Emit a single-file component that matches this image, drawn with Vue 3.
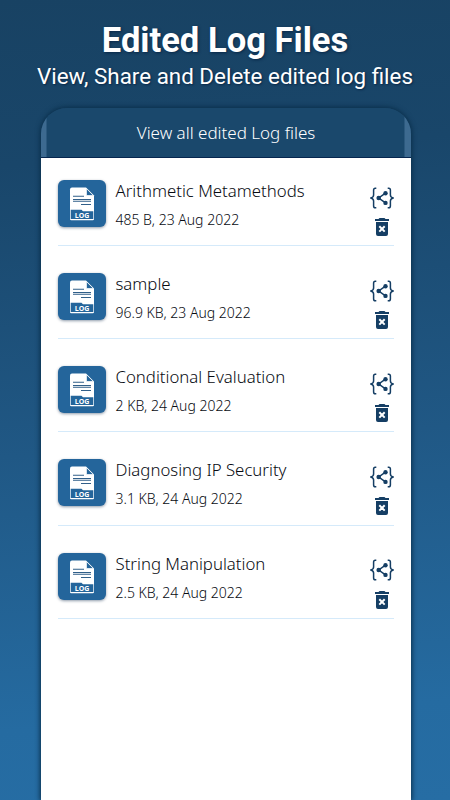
<script setup>
const files = [
  { name: 'Arithmetic Metamethods', meta: '485 B, 23 Aug 2022' },
  { name: 'sample', meta: '96.9 KB, 23 Aug 2022' },
  { name: 'Conditional Evaluation', meta: '2 KB, 24 Aug 2022' },
  { name: 'Diagnosing IP Security', meta: '3.1 KB, 24 Aug 2022' },
  { name: 'String Manipulation', meta: '2.5 KB, 24 Aug 2022' },
]
</script>

<template>
  <main class="page">
    <h1 class="title">Edited Log Files</h1>
    <p class="subtitle">View, Share and Delete edited log files</p>
    <section class="panel">
      <header class="bar"><span>View all edited Log files</span></header>
      <ul class="list">
        <li v-for="file in files" :key="file.name" class="row">
          <div class="thumb">
            <svg width="48" height="48" viewBox="0 0 48 48">
              <path d="M14 7.5H28L36 15.5V39Q36 40.3 34.7 40.3H13.3Q12 40.3 12 39V9.5Q12 7.5 14 7.5Z" fill="#fff" />
              <path d="M28.4 8.5V15.6H35.5Z" fill="#24659b" stroke="#fff" stroke-width=".8" />
              <path d="M15 16.3H26M15 19.5H33M15 21.3H33M23 24.5H33" stroke="#315f89" stroke-width="1.1" />
              <path d="M12.7 29.8H23.5L25 31.2H35.3V39H12.7Z" fill="#24659b" />
              <text x="24" y="38" text-anchor="middle" class="log">LOG</text>
            </svg>
          </div>
          <div class="info">
            <div class="name">{{ file.name }}</div>
            <div class="meta">{{ file.meta }}</div>
          </div>
          <div class="actions">
            <svg width="24" height="22" viewBox="0 0 24 22" fill="none" stroke="#153e64">
              <path d="M6.3 1.2H5.3Q3.6 1.2 3.6 3V8Q3.6 10.2 1 11Q3.6 11.8 3.6 14V19Q3.6 20.8 5.3 20.8H6.3M17.7 1.2H18.7Q20.4 1.2 20.4 3V8Q20.4 10.2 23 11Q20.4 11.8 20.4 14V19Q20.4 20.8 18.7 20.8H17.7" stroke-width="1.5" />
              <path d="M15.5 6.2L8.7 11L15.5 15.9" stroke-width="1.5" />
              <g fill="#153e64" stroke="none">
                <circle cx="15.5" cy="6.2" r="2.2" /><circle cx="8.7" cy="11" r="2.3" /><circle cx="15.5" cy="15.9" r="2.2" />
              </g>
            </svg>
            <svg width="14" height="18" viewBox="0 0 14 18">
              <path d="M0 1H3.5L4.5 0H9.5L10.5 1H14V3H0ZM1 4H13V16Q13 18 11 18H3Q1 18 1 16Z" fill="#153e64" />
              <path d="M4.3 8.2L9.7 13.6M9.7 8.2L4.3 13.6" stroke="#fff" stroke-width="2" />
            </svg>
          </div>
        </li>
      </ul>
    </section>
  </main>
</template>

<style>
body { margin: 0; }
</style>

<style scoped>
.page {
  box-sizing: border-box;
  width: 450px;
  height: 800px;
  padding-top: 18px;
  overflow: hidden;
  display: flex;
  flex-direction: column;
  background: linear-gradient(176deg, #184263 0%, #19466a 20%, #205885 55%, #256ba1 88%, #266da4 100%);
  font-family: Roboto, sans-serif;
  color: #fff;
}
.title {
  margin: 0;
  text-align: center;
  font-size: 34.6px;
  line-height: 44px;
  font-weight: 700;
  text-shadow: 1px 1px 3px #082747;
}
.subtitle {
  margin: 0;
  text-align: center;
  font-size: 22.4px;
  line-height: 28px;
  text-shadow: 1px 1px 2px #082747;
  white-space: nowrap;
}
.panel {
  margin: 18px 39px 0 41px;
  flex: 1;
  display: flex;
  flex-direction: column;
  border-radius: 26px 26px 0 0;
  overflow: hidden;
  box-shadow: 0 0 5px 1px #092e4a;
  font-family: "Noto Sans", "Open Sans", sans-serif;
}
.bar {
  box-sizing: border-box;
  height: 50px;
  display: flex;
  align-items: center;
  justify-content: center;
  background: linear-gradient(90deg, #3d6a90 0, #3d6a90 5px, #1a486c 6px, #1a486c 363px, #3d6a90 364px);
  border-bottom: 1px solid #06264f;
  font-size: 17px;
  font-weight: 300;
}
.list {
  flex: 1;
  list-style: none;
  margin: 0;
  padding: 0 17px;
  background: #fff;
  color: #080b12;
}
.row {
  box-sizing: border-box;
  height: 93.2px;
  display: flex;
  padding-top: 27px;
  border-bottom: 1px solid #d5eafa;
}
.row:first-child { height: 88px; padding-top: 22px; }
.thumb {
  width: 48px;
  height: 47px;
  border-radius: 6px;
  background: #24659b;
  box-shadow: 0 1px 3px #8f9baa;
}
.thumb svg { display: block; }
.log { font: 700 7px "Open Sans", sans-serif; fill: #fff; }
.info { flex: 1; padding-left: 9.5px; white-space: nowrap; }
.name { margin-top: -1px; font-size: 16.8px; line-height: 24px; font-weight: 350; }
.meta { margin-top: 6px; font-size: 14px; line-height: 22px; font-weight: 350; }
.actions {
  width: 24px;
  padding-top: 6.5px;
  display: flex;
  flex-direction: column;
  align-items: center;
  gap: 9.5px;
}
</style>
